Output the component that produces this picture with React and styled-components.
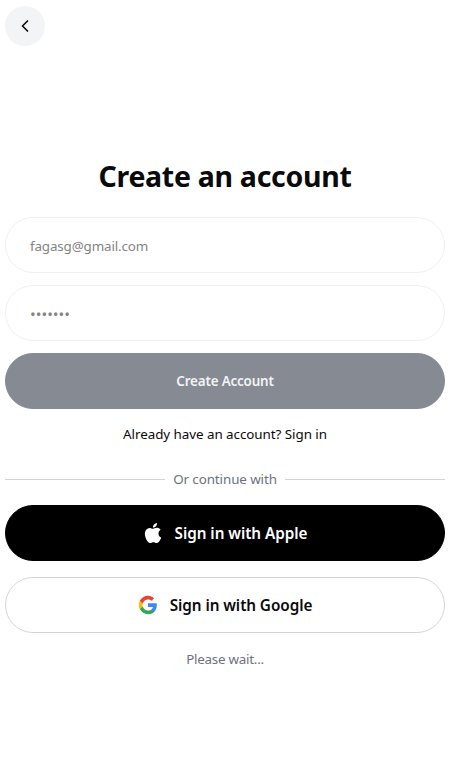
import React from "react";
import styled, { createGlobalStyle } from "styled-components";

const GlobalStyle = createGlobalStyle`
  *, *::before, *::after { box-sizing: border-box; }
  body { margin: 0; background: #fff; color: #0a0a0a; font-family: "Noto Sans", "Open Sans", sans-serif; }
  button, input { font-family: inherit; }
`;

const Page = styled.main`
  height: 757px;
  padding: 6px 5px 0;
  display: flex;
  flex-direction: column;
  overflow: hidden;
`;

const BackButton = styled.button`
  width: 40px;
  height: 40px;
  flex: none;
  padding: 0;
  border: 0;
  border-radius: 50%;
  background: #f3f4f6;
  color: #0a0a0a;
  display: flex;
  align-items: center;
  justify-content: center;
`;

const Title = styled.h1`
  margin: 112px 0 23px;
  font-size: 28.5px;
  line-height: 36px;
  font-weight: 700;
  text-align: center;
  white-space: nowrap;
  letter-spacing: ${(p) => p.$tracking};
`;

const Form = styled.form`
  display: flex;
  flex-direction: column;
  gap: 12px;
`;

const Field = styled.input`
  width: 100%;
  height: 56px;
  padding: 2px 24px 0;
  border: 1px solid #f0f0f2;
  border-radius: 28px;
  background: #fff;
  color: #848484;
  outline: 0;
  font-size: ${(p) => p.$size || "13.4px"};
  letter-spacing: ${(p) => p.$tracking || "0"};
`;

const PillButton = styled.button`
  width: 100%;
  height: 56px;
  flex: none;
  padding: 0;
  border: 1px solid ${(p) => p.$border || p.$background};
  border-radius: 28px;
  background: ${(p) => p.$background};
  color: ${(p) => p.$color};
  display: flex;
  align-items: center;
  justify-content: center;
  gap: 12px;
  font-size: ${(p) => p.$size || "15.3px"};
  font-weight: 600;
  letter-spacing: ${(p) => p.$tracking || "0"};
`;

const Caption = styled.p`
  margin: ${(p) => p.$margin || "0"};
  font-size: 13.4px;
  line-height: 20px;
  text-align: center;
  white-space: nowrap;
  color: ${(p) => p.$color || "#6b7280"};
  letter-spacing: ${(p) => p.$tracking || "0"};
`;

const Divider = styled.div`
  display: flex;
  align-items: center;
  gap: 8px;
  margin: 25px 0 16px;
`;

const Rule = styled.span`
  flex: 1;
  height: 1px;
  background: #d1d5db;
`;

const Providers = styled.div`
  display: flex;
  flex-direction: column;
  gap: 16px;
`;

const ChevronIcon = () => (
  <svg width="16" height="16" viewBox="0 0 24 24" fill="none" stroke="currentColor" strokeWidth="2.5">
    <path d="M15.75 19.5 8.25 12l7.5-7.5" strokeLinecap="round" strokeLinejoin="round" />
  </svg>
);

const AppleIcon = () => (
  <svg width="20" height="20" viewBox="0 0 24 24" fill="currentColor">
    <path d="M12.152 6.896c-.948 0-2.415-1.078-3.96-1.04-2.04.027-3.91 1.183-4.961 3.014-2.117 3.675-.546 9.103 1.519 12.09 1.013 1.454 2.208 3.09 3.792 3.039 1.52-.065 2.09-.987 3.935-.987 1.831 0 2.35.987 3.96.948 1.637-.026 2.676-1.48 3.676-2.948 1.156-1.688 1.636-3.325 1.662-3.415-.039-.013-3.182-1.221-3.22-4.857-.026-3.04 2.48-4.494 2.597-4.559-1.429-2.09-3.623-2.324-4.39-2.376-2-.156-3.675 1.09-4.61 1.09zM15.53 3.83c.843-1.012 1.4-2.427 1.245-3.83-1.207.052-2.662.805-3.532 1.818-.78.896-1.454 2.338-1.273 3.714 1.338.104 2.715-.688 3.559-1.701" />
  </svg>
);

const GoogleIcon = () => (
  <svg width="20" height="20" viewBox="0 0 24 24">
    <path fill="#4285F4" d="M22.56 12.25c0-.78-.07-1.53-.2-2.25H12v4.26h5.92c-.26 1.37-1.04 2.53-2.21 3.31v2.77h3.57c2.08-1.92 3.28-4.74 3.28-8.09z" />
    <path fill="#34A853" d="M12 23c2.97 0 5.46-.98 7.28-2.66l-3.57-2.77c-.98.66-2.23 1.06-3.71 1.06-2.86 0-5.29-1.93-6.16-4.53H2.18v2.84C3.99 20.53 7.7 23 12 23z" />
    <path fill="#FBBC05" d="M5.84 14.09c-.22-.66-.35-1.36-.35-2.09s.13-1.43.35-2.09V7.07H2.18C1.43 8.55 1 10.22 1 12s.43 3.45 1.18 4.93l3.66-2.84z" />
    <path fill="#EA4335" d="M12 5.38c1.62 0 3.06.56 4.21 1.64l3.15-3.15C17.45 2.09 14.97 1 12 1 7.7 1 3.99 3.47 2.18 7.07l3.66 2.84c.87-2.6 3.3-4.53 6.16-4.53z" />
  </svg>
);

export default function App() {
  return (
    <>
      <GlobalStyle />
      <Page>
        <BackButton type="button" aria-label="Back"><ChevronIcon /></BackButton>
        <Title $tracking="-0.3px">Create an account</Title>
        <Form onSubmit={(e) => e.preventDefault()}>
          <Field type="email" aria-label="Email" defaultValue="fagasg@gmail.com" $tracking="-0.14px" />
          <Field type="password" aria-label="Password" defaultValue="1234567" $size="15.2px" />
          <PillButton $background="#868a93" $color="#f3f4f5" $size="13.4px" $tracking="-0.17px">Create Account</PillButton>
        </Form>
        <Caption $margin="15px 0 0" $color="#0a0a0a" $tracking="-0.05px">Already have an account? Sign in</Caption>
        <Divider>
          <Rule />
          <Caption $tracking="-0.1px">Or continue with</Caption>
          <Rule />
        </Divider>
        <Providers>
          <PillButton type="button" $background="#000" $color="#fff" $tracking="-0.05px"><AppleIcon />Sign in with Apple</PillButton>
          <PillButton type="button" $background="#fff" $border="#d1d5db" $color="#0a0a0a" $tracking="-0.07px"><GoogleIcon />Sign in with Google</PillButton>
        </Providers>
        <Caption $margin="16px 0 0" $tracking="-0.25px">Please wait...</Caption>
      </Page>
    </>
  );
}
